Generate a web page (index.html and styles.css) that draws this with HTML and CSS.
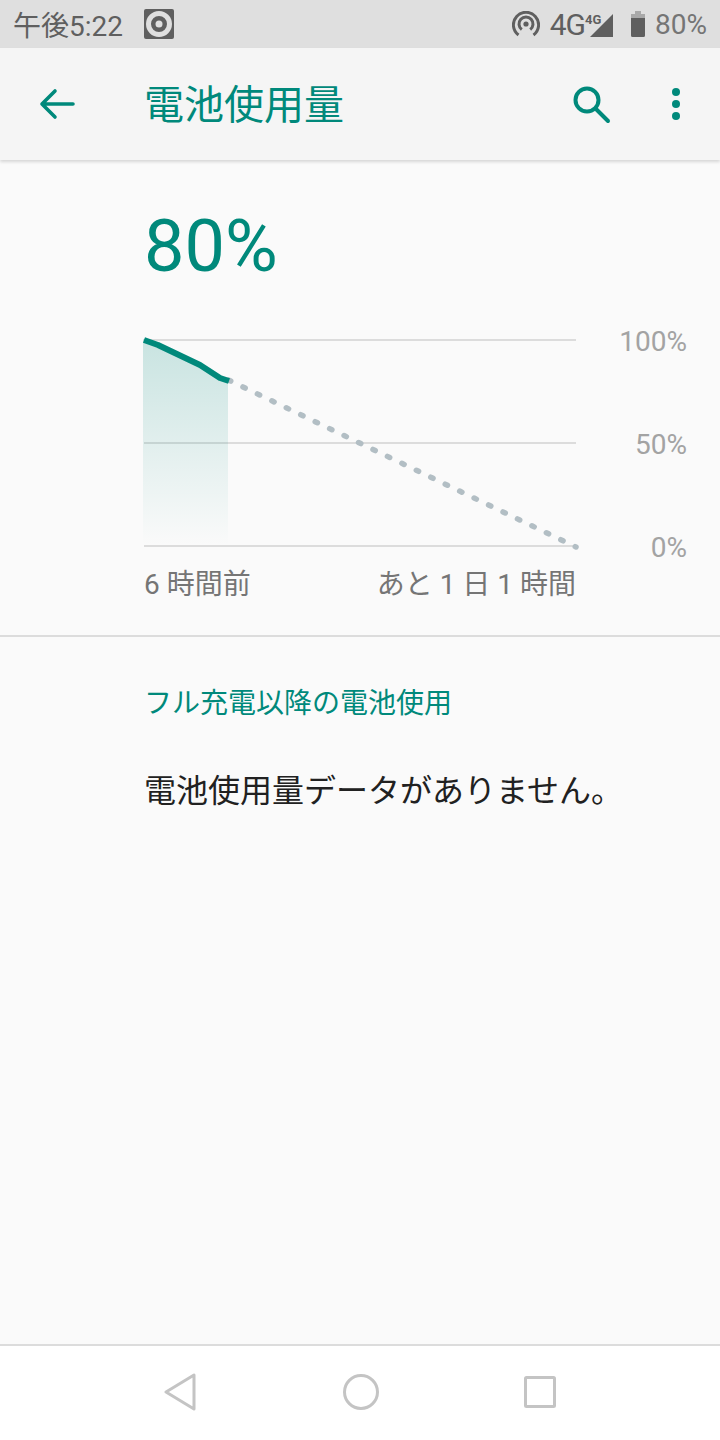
FILE: index.html
```html
<!DOCTYPE html>
<html lang="ja">
<head>
    <title>電池使用量</title>
    <meta charset="utf-8">
    <link rel="stylesheet" href="styles.css">
</head>
<body>
    <div class="status-bar">
        <span class="clock">午後5:22</span>
        <svg class="disc" width="30" height="30" viewBox="0 0 30 30">
            <rect width="30" height="30" rx="2" fill="#5f5f5f"/>
            <circle cx="15" cy="15" r="10.5" fill="none" stroke="#dfdfdf" stroke-width="5"/>
            <circle cx="15" cy="15" r="3.5" fill="#dfdfdf"/>
        </svg>
        <div class="status-right">
            <svg class="hotspot" width="28" height="26" viewBox="0 0 28 26" fill="none" stroke="#5f5f5f" stroke-width="3">
                <path d="M6.5 24a12.6 12.6 0 1 1 15 0"/>
                <path d="M9.8 18.5a7 7 0 1 1 8.4 0"/>
                <circle cx="14" cy="13" r="2.6" fill="#5f5f5f" stroke="none"/>
            </svg>
            <span class="net">4G</span>
            <span class="net-small">4G</span>
            <svg class="signal" width="23" height="23" viewBox="0 0 23 23"><path d="M0 23 23 0V23Z" fill="#5f5f5f"/></svg>
            <svg class="battery" width="14" height="26" viewBox="0 0 14 26">
                <path d="M4 0h6v3h4v5H0V3h4Z" fill="#a9a9a9"/>
                <path d="M0 7h14v17.500a1.500 1.500 0 0 1-1.500 1.500h-11A1.500 1.500 0 0 1 0 24.500Z" fill="#5f5f5f"/>
            </svg>
            <span class="percent">80%</span>
        </div>
    </div>

    <header class="app-bar">
        <svg class="back" width="36" height="32" viewBox="0 0 36 32" fill="none" stroke="#00897b" stroke-width="3.600" stroke-linecap="round" stroke-linejoin="round">
            <path d="M34 16H3M16 3 3 16l13 13"/>
        </svg>
        <h1 class="title">電池使用量</h1>
        <svg class="search" width="38" height="38" viewBox="0 0 38 38" fill="none" stroke="#00897b" stroke-width="4" stroke-linecap="round">
            <circle cx="14" cy="14" r="11.500"/>
            <path d="M23 23 35 35"/>
        </svg>
        <div class="more"><i></i><i></i><i></i></div>
    </header>

    <main class="content">
        <div class="level">80%</div>

        <div class="chart">
            <svg class="plot" width="440" height="218" viewBox="0 0 440 218">
                <defs>
                    <linearGradient id="fade" x1="0" y1="0" x2="0" y2="1">
                        <stop offset="0" stop-color="#00897b" stop-opacity="0.2"/>
                        <stop offset="1" stop-color="#00897b" stop-opacity="0"/>
                    </linearGradient>
                </defs>
                <g stroke="#dcdcdc" stroke-width="2">
                    <path d="M4 7H436M4 110H436M4 213H436"/>
                </g>
                <path d="M3 6 20 11 60 32 80 45 88 47V213H3Z" fill="url(#fade)"/>
                <path d="M88.500 47 436 214" fill="none" stroke="#b2bec4" stroke-width="5.500" stroke-linecap="round" stroke-dasharray="2.500 13.530"/>
                <path d="M4 7 18 12 60 32 80 45 89 48" fill="none" stroke="#00897b" stroke-width="6" stroke-linejoin="round"/>
            </svg>
            <div class="axis-y">
                <span>100%</span>
                <span>50%</span>
                <span>0%</span>
            </div>
        </div>
        <div class="axis-x">
            <span>6 時間前</span>
            <span>あと 1 日 1 時間</span>
        </div>

        <div class="section">
            <h2 class="section-title">フル充電以降の電池使用</h2>
            <p class="empty">電池使用量データがありません。</p>
        </div>
    </main>

    <nav class="nav-bar">
        <svg width="34" height="38" viewBox="0 0 34 38" fill="none" stroke="#c4c4c4" stroke-width="3" stroke-linejoin="round"><path d="M31 2V36L3 19Z"/></svg>
        <svg width="36" height="36" viewBox="0 0 36 36" fill="none" stroke="#c4c4c4" stroke-width="3"><circle cx="18" cy="18" r="16.500"/></svg>
        <svg width="32" height="32" viewBox="0 0 32 32" fill="none" stroke="#c4c4c4" stroke-width="3" stroke-linejoin="round"><rect x="1.500" y="1.500" width="29" height="29" rx="1"/></svg>
    </nav>
</body>
</html>
```

FILE: styles.css
```css
html, body {
    margin: 0;
    padding: 0;
}
body {
    width: 720px;
    height: 1440px;
    display: flex;
    flex-direction: column;
    background: #fafafa;
    font-family: Roboto, "Noto Sans CJK JP", sans-serif;
    overflow: hidden;
}
.status-bar {
    height: 48px;
    flex: none;
    display: flex;
    align-items: center;
    padding: 0 13px;
    background: #dfdfdf;
    color: #5f5f5f;
    box-sizing: border-box;
}
.clock {
    font-size: 28px;
    width: 131px;
}
.status-right {
    margin-left: auto;
    display: flex;
    align-items: center;
}
.hotspot {
    margin-right: 10px;
}
.net {
    font-size: 30px;
    letter-spacing: -1px;
}
.net-small {
    font-size: 13px;
    font-weight: 700;
    align-self: flex-start;
    margin-top: 5px;
    width: 5px;
    position: relative;
    z-index: 1;
}
.signal {
    margin-top: 2px;
}
.battery {
    margin-left: 18px;
}
.percent {
    margin-left: 10px;
    font-size: 28px;
    color: #757575;
}
.app-bar {
    height: 112px;
    flex: none;
    display: flex;
    align-items: center;
    background: #f5f5f5;
    box-shadow: 0 2px 3px rgba(0,0,0,0.14);
    position: relative;
    padding-left: 39px;
    box-sizing: border-box;
}
.title {
    margin: 0 0 4px 69px;
    font-size: 40px;
    font-weight: 400;
    color: #00897b;
    width: 429px;
}
.search {
    margin-top: 1px;
}
.more {
    margin-left: 61px;
    display: flex;
    flex-direction: column;
    gap: 4px;
}
.more i {
    display: block;
    width: 8px;
    height: 8px;
    border-radius: 50%;
    background: #00897b;
}
.content {
    flex: 1;
    padding-top: 45px;
}
.level {
    margin-left: 144px;
    font-size: 72px;
    line-height: 84px;
    color: #00897b;
}
.chart {
    display: flex;
    margin: 44px 0 0 140px;
}
.axis-y {
    width: 107px;
    height: 236px;
    margin-top: -6px;
    display: flex;
    flex-direction: column;
    justify-content: space-between;
    align-items: flex-end;
    font-size: 28px;
    line-height: 30px;
    color: #a3a3a3;
}
.axis-x {
    width: 432px;
    margin: 4px 0 0 144px;
    display: flex;
    justify-content: space-between;
    font-size: 28px;
    line-height: 36px;
    color: #757575;
}
.section {
    margin-top: 32px;
    padding: 49px 0 0 144px;
    border-top: 2px solid #dcdcdc;
}
.section-title {
    margin: 0;
    font-size: 28px;
    line-height: 36px;
    font-weight: 400;
    color: #00897b;
}
.empty {
    margin: 48px 0 0;
    font-size: 32px;
    line-height: 42px;
    color: #212121;
}
.nav-bar {
    height: 92px;
    flex: none;
    display: flex;
    align-items: center;
    padding: 0 164px 2px 163px;
    justify-content: space-between;
    background: #ffffff;
    border-top: 2px solid #dcdcdc;
}
```
